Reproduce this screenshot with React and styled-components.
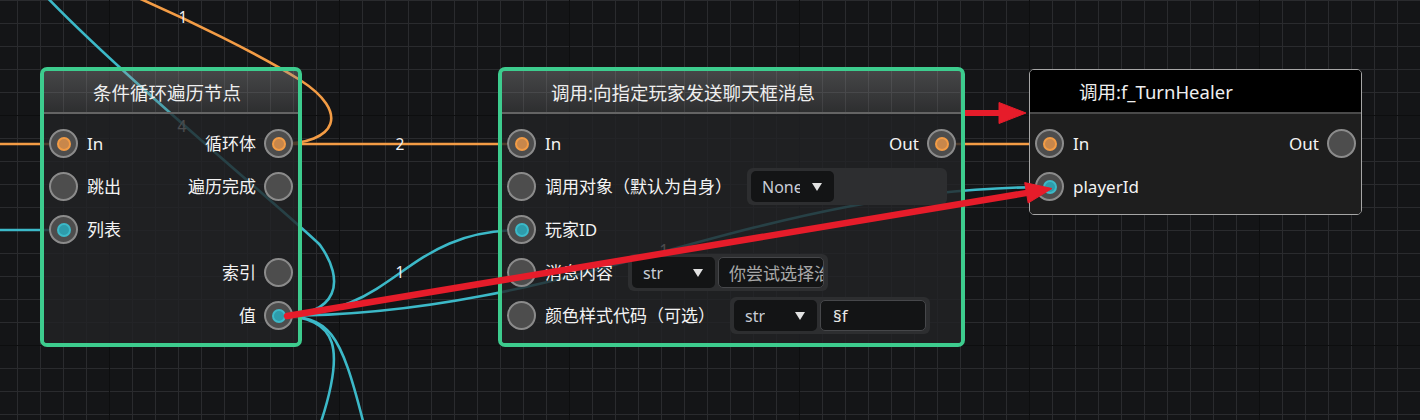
import styled, { createGlobalStyle, css } from 'styled-components';

const GlobalStyle = createGlobalStyle`
  html, body {
    margin: 0;
    padding: 0;
    background: #141517;
  }
  body {
    font-family: "Noto Sans", "Noto Sans CJK SC", sans-serif;
  }
`;

const ORANGE = '#f39c45';
const CYAN = '#3cb9c8';
const RED = '#e61c2a';

const Canvas = styled.div`
  position: relative;
  width: 1420px;
  height: 420px;
  overflow: hidden;
  background-color: #141517;
  background-image:
    linear-gradient(to right, #0d0e0f 1px, transparent 1px),
    linear-gradient(to bottom, #0d0e0f 1px, transparent 1px),
    linear-gradient(to right, #2a2b2e 1px, transparent 1px),
    linear-gradient(to bottom, #2a2b2e 1px, transparent 1px);
  background-size: 230px 230px, 230px 230px, 23px 23px, 23px 23px;
  background-position: 109px 0, 0 115px, 17px 0, 0 0;
`;

const Layer = styled.svg`
  position: absolute;
  left: 0;
  top: 0;
  z-index: ${(p) => p.$z};
  pointer-events: none;
`;

const WireLabel = styled.text`
  font-family: "Noto Sans", sans-serif;
  font-size: 15.5px;
  fill: #f0f0f0;
`;

const Node = styled.div`
  position: absolute;
  left: ${(p) => p.$x}px;
  top: ${(p) => p.$y}px;
  width: ${(p) => p.$w}px;
  box-sizing: border-box;
  border: 4px solid #3dcc8e;
  border-radius: 7px;
  overflow: hidden;
  z-index: 1;
  ${(p) =>
    p.$plain &&
    css`
      border: 1.5px solid #a6a6a6;
      border-radius: 5px;
    `}
`;

const Header = styled.div`
  height: ${(p) => (p.$plain ? 42 : 41)}px;
  display: flex;
  align-items: center;
  padding-left: 49px;
  border-bottom: 2px solid ${(p) => (p.$plain ? '#4a4a4a' : '#646464')};
  background: ${(p) =>
    p.$plain
      ? '#000'
      : 'linear-gradient(rgba(150, 150, 150, 0.38), rgba(105, 105, 105, 0.3))'};
  color: #efefef;
  font-size: 18.5px;
  white-space: nowrap;
`;

const Body = styled.div`
  padding: 8px 0 6px;
  background: ${(p) => (p.$plain ? '#1e1e1e' : 'rgba(34, 35, 37, 0.8)')};
`;

const Row = styled.div`
  height: 43px;
  display: flex;
  align-items: center;
  padding: 0 5px;
`;

const Port = styled.div`
  display: flex;
  align-items: center;
  gap: ${(p) => (p.$right ? 8 : 9)}px;
  margin-left: ${(p) => (p.$right ? 'auto' : '0')};
`;

const Pin = styled.span`
  width: 29px;
  height: 29px;
  box-sizing: border-box;
  border-radius: 50%;
  border: 2.7px solid #8b8b8b;
  background: #4d4d4d;
  display: grid;
  place-items: center;
  flex: none;
`;

const Dot = styled.span`
  width: 14px;
  height: 14px;
  box-sizing: border-box;
  border-radius: 50%;
  border: 2.5px solid ${(p) => (p.$kind === 'exec' ? ORANGE : CYAN)};
  background: ${(p) => (p.$kind === 'exec' ? '#c8874b' : '#2e9cab')};
`;

const Label = styled.span`
  font-size: 17px;
  line-height: 1;
  color: #f3f3f3;
  white-space: nowrap;
`;

const Field = styled.div`
  margin-left: 15px;
  width: 200px;
  height: 37px;
  box-sizing: border-box;
  padding: 3px 4px;
  display: flex;
  gap: 3px;
  background: #2d2e30;
  border-radius: 6px;
  flex: none;
`;

const Select = styled.div`
  width: 83px;
  flex: none;
  box-sizing: border-box;
  display: flex;
  align-items: center;
  justify-content: space-between;
  padding: 0 12px 0 11px;
  background: #131415;
  border-radius: 5px;
  color: #c9cdd6;
  font-size: 16px;
`;

const SelectText = styled.span`
  overflow: hidden;
  white-space: nowrap;
  max-width: ${(p) => (p.$clip ? '38px' : 'none')};
`;

const Caret = styled.span`
  width: 0;
  height: 0;
  border-left: 5px solid transparent;
  border-right: 5px solid transparent;
  border-top: 8px solid #e2e2e2;
`;

const Input = styled.div`
  flex: 1;
  min-width: 0;
  box-sizing: border-box;
  border: 1px solid #46474a;
  border-radius: 5px;
  background: #131415;
  padding-left: ${(p) => p.$pad}px;
  display: flex;
  align-items: center;
  overflow: hidden;
  white-space: nowrap;
  color: ${(p) => (p.$muted ? '#a8a8a8' : '#e8e8e8')};
  font-size: 17px;
`;

function InPort({ label, kind }) {
  return (
    <Port>
      <Pin>{kind && <Dot $kind={kind} />}</Pin>
      <Label>{label}</Label>
    </Port>
  );
}

function OutPort({ label, kind }) {
  return (
    <Port $right>
      <Label>{label}</Label>
      <Pin>{kind && <Dot $kind={kind} />}</Pin>
    </Port>
  );
}

function Wires() {
  return (
    <Layer $z={0} width="1420" height="420" viewBox="0 0 1420 420">
      <g fill="none" strokeWidth="2.6" strokeLinecap="round">
        <path d="M -10 144 L 64 144" stroke={ORANGE} />
        <path d="M 278 144 L 522 144" stroke={ORANGE} />
        <path d="M 941 144 L 1050 144" stroke={ORANGE} />
        <path d="M 278 144 C 338 144, 350 112, 300 80 C 260 55, 190 20, 120 -10" stroke={ORANGE} />

        <path d="M -10 230 L 64 230" stroke={CYAN} />
        <path d="M 278 316 C 340 316, 345 280, 320 245 C 290 215, 120 75, 40 -10" stroke={CYAN} />
        <path d="M 278 316 C 400 316, 400 230, 522 230" stroke={CYAN} />
        <path d="M 278 316 C 578 316, 750 187, 1050 187" stroke={CYAN} />
        <path d="M 278 316 C 340 316, 345 350, 320 425" stroke={CYAN} />
        <path d="M 278 316 C 330 316, 340 330, 364 425" stroke={CYAN} />
      </g>
      <g textAnchor="middle" dominantBaseline="central">
        <WireLabel x="183" y="17">1</WireLabel>
        <WireLabel x="400" y="144">2</WireLabel>
        <WireLabel x="400" y="272">1</WireLabel>
        <WireLabel x="182" y="126">4</WireLabel>
        <WireLabel x="664" y="250">1</WireLabel>
      </g>
    </Layer>
  );
}

function Marks() {
  return (
    <Layer $z={2} width="1420" height="420" viewBox="0 0 1420 420">
      <g fill={RED} stroke={RED}>
        <line x1="287" y1="316" x2="1030" y2="192.4" strokeWidth="6.5" strokeLinecap="round" />
        <polygon points="1052,188.5 1024.7,182.6 1028.2,203" strokeWidth="1" strokeLinejoin="round" />
        <line x1="965" y1="113" x2="1004" y2="113" strokeWidth="6" />
        <polygon points="999,102.5 1026,113 999,123.5" strokeWidth="1" strokeLinejoin="round" />
      </g>
    </Layer>
  );
}

export default function App() {
  return (
    <>
      <GlobalStyle />
      <Canvas>
        <Wires />

        <Node $x={40} $y={67} $w={262}>
          <Header>条件循环遍历节点</Header>
          <Body>
            <Row>
              <InPort label="In" kind="exec" />
              <OutPort label="循环体" kind="exec" />
            </Row>
            <Row>
              <InPort label="跳出" />
              <OutPort label="遍历完成" />
            </Row>
            <Row>
              <InPort label="列表" kind="data" />
            </Row>
            <Row>
              <OutPort label="索引" />
            </Row>
            <Row>
              <OutPort label="值" kind="data" />
            </Row>
          </Body>
        </Node>

        <Node $x={498} $y={67} $w={467}>
          <Header>调用:向指定玩家发送聊天框消息</Header>
          <Body>
            <Row>
              <InPort label="In" kind="exec" />
              <OutPort label="Out" kind="exec" />
            </Row>
            <Row>
              <InPort label="调用对象（默认为自身）" />
              <Field>
                <Select>
                  <SelectText $clip>None</SelectText>
                  <Caret />
                </Select>
              </Field>
            </Row>
            <Row>
              <InPort label="玩家ID" kind="data" />
            </Row>
            <Row>
              <InPort label="消息内容" />
              <Field>
                <Select>
                  <SelectText>str</SelectText>
                  <Caret />
                </Select>
                <Input $pad={10} $muted>你尝试选择治疗</Input>
              </Field>
            </Row>
            <Row>
              <InPort label="颜色样式代码（可选）" />
              <Field>
                <Select>
                  <SelectText>str</SelectText>
                  <Caret />
                </Select>
                <Input $pad={12}>§f</Input>
              </Field>
            </Row>
          </Body>
        </Node>

        <Node $x={1029} $y={69} $w={333} $plain>
          <Header $plain>调用:f_TurnHealer</Header>
          <Body $plain>
            <Row>
              <InPort label="In" kind="exec" />
              <OutPort label="Out" />
            </Row>
            <Row>
              <InPort label="playerId" kind="data" />
            </Row>
          </Body>
        </Node>

        <Marks />
      </Canvas>
    </>
  );
}
